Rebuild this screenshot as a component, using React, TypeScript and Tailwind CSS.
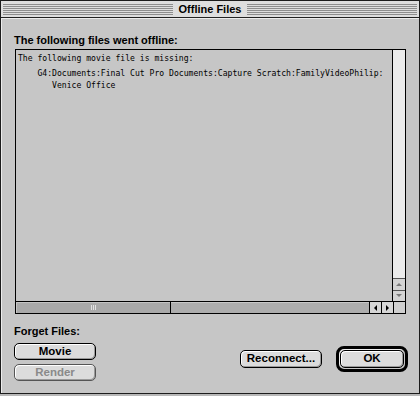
import React from 'react';

const ui = "font-['Liberation_Sans',Arial,sans-serif]";
const mono = "font-['DejaVu_Sans_Mono','Liberation_Mono',monospace]";

function Stripes() {
  return (
    <div className="flex flex-1 flex-col gap-px">
      {[0, 1, 2, 3, 4, 5].map((i) => (
        <div key={i} className="h-px bg-[#8e8e8e]" />
      ))}
    </div>
  );
}

function Arrow({ dir, dim }: { dir: 'up' | 'down' | 'left' | 'right'; dim?: boolean }) {
  const pts = {
    up: '1,5 4,2 7,5',
    down: '1,2 4,5 7,2',
    left: '5,1 2,4 5,7',
    right: '2,1 5,4 2,7',
  }[dir];
  return (
    <svg width="8" height="8" viewBox="0 0 8 8">
      <polygon points={pts} fill={dim ? '#7a7a7a' : '#000'} />
    </svg>
  );
}

function Button({
  label,
  disabled,
  className = '',
}: {
  label: string;
  disabled?: boolean;
  className?: string;
}) {
  return (
    <div
      className={`flex items-center justify-center rounded-[5px] border bg-[#dcdcdc] shadow-[inset_1px_1px_0_#fff,inset_-1px_-1px_0_#9a9a9a] text-[11.5px] font-bold leading-none ${
        disabled ? 'border-[#555] text-[#8a8a8a]' : 'border-black text-black'
      } ${className}`}
    >
      {label}
    </div>
  );
}

export default function App() {
  return (
    <div className={`h-[396px] w-[420px] bg-[#b8b8b8] ${ui}`}>
      <div className="flex h-[394px] flex-col border border-[#1c1c1c] bg-[#c6c6c6]">
        {/* title bar */}
        <div className="flex h-[17px] items-center gap-[6px] border-b border-[#222] bg-[#dedede] px-[2px]">
          <Stripes />
          <span className="text-[11px] font-bold leading-none text-black">Offline Files</span>
          <Stripes />
        </div>

        <div className="flex flex-1 flex-col border-t border-l border-[#ececec] pl-[12px] pr-[13px]">
          <h2 className="mt-[13px] h-[16px] text-[11px] font-bold leading-[16px] text-black">
            The following files went offline:
          </h2>

          {/* list box */}
          <div className="ml-px mt-px flex h-[265px] flex-col border border-black">
            <div className="flex min-h-0 flex-1">
              <div className={`flex-1 overflow-hidden pl-[2px] pt-[2px] text-[8.1px] leading-[12px] text-black ${mono}`}>
                <div>The following movie file is missing:</div>
                <div className="mt-[3px] whitespace-pre">
                  {'    G4:Documents:Final Cut Pro Documents:Capture Scratch:FamilyVideoPhilip:'}
                </div>
                <div className="whitespace-pre">{'       Venice Office'}</div>
              </div>
              <div className="flex w-[13px] flex-col border-l border-black bg-[#ebebeb]">
                <div className="flex-1" />
                <div className="flex h-[12px] items-center justify-center border-t border-[#555] bg-[#d4d4d4]">
                  <Arrow dir="up" dim />
                </div>
                <div className="flex h-[11px] items-center justify-center border-t border-[#555] bg-[#d4d4d4]">
                  <Arrow dir="down" dim />
                </div>
              </div>
            </div>
            <div className="flex h-[12px] border-t border-black">
              <div className="flex w-[155px] items-center justify-center border-r border-black bg-[#a9a9a9] shadow-[inset_1px_1px_0_#c4c4c4]">
                <div className="flex gap-px">
                  <div className="h-[5px] w-px bg-[#e2e2e2]" />
                  <div className="h-[5px] w-px bg-[#e2e2e2]" />
                  <div className="h-[5px] w-px bg-[#e2e2e2]" />
                </div>
              </div>
              <div className="flex-1 bg-[#adadad] shadow-[inset_0_1px_0_#c8c8c8]" />
              <div className="flex w-[12px] items-center justify-center border-l border-black bg-[#d6d6d6]">
                <Arrow dir="left" />
              </div>
              <div className="flex w-[12px] items-center justify-center border-l border-black bg-[#d6d6d6]">
                <Arrow dir="right" />
              </div>
              <div className="w-[12px] border-l border-black bg-[#cfcfcf]" />
            </div>
          </div>

          {/* bottom controls */}
          <div className="mt-[9px] flex items-start">
            <div className="flex flex-col">
              <div className="h-[16px] text-[11px] font-bold leading-[16px] text-black">Forget Files:</div>
              <Button label="Movie" className="mt-[4px] h-[17px] w-[82px]" />
              <Button label="Render" disabled className="mt-[4px] h-[17px] w-[82px]" />
            </div>
            <div className="ml-auto mt-[23px] flex items-center gap-[14px]">
              <Button label="Reconnect..." className="h-[18px] w-[82px]" />
              <div className="-mr-[2px] rounded-[8px] border-[3px] border-black bg-[#c6c6c6] p-px shadow-[inset_1px_1px_0_#eee]">
                <Button label="OK" className="h-[18px] w-[64px]" />
              </div>
            </div>
          </div>
        </div>
      </div>
    </div>
  );
}
